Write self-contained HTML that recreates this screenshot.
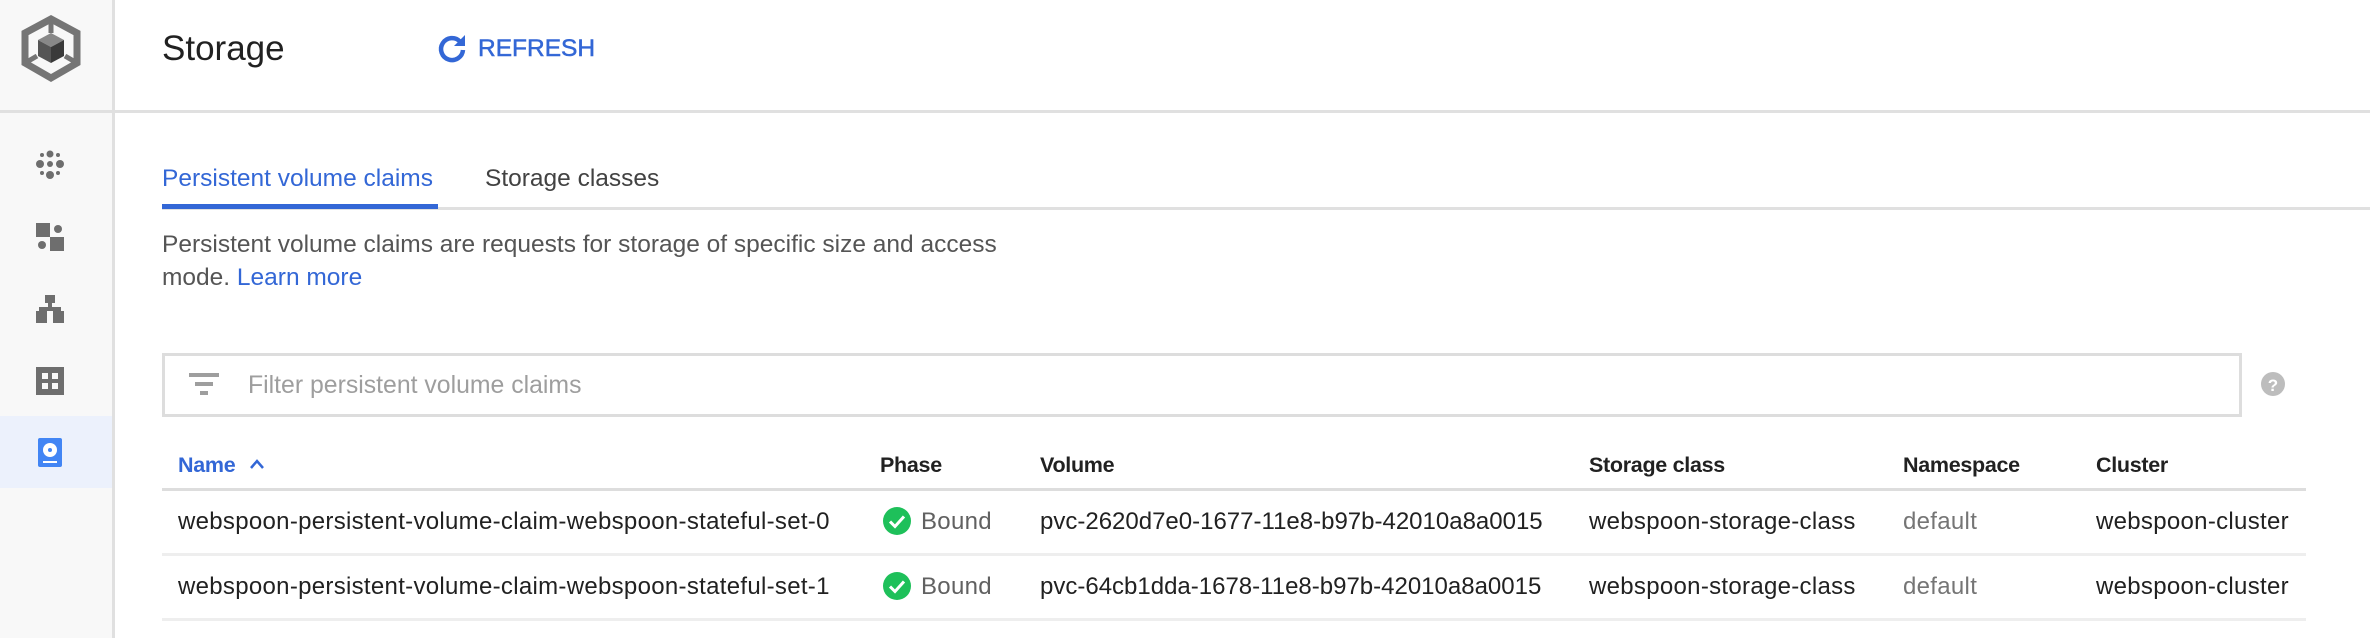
<!DOCTYPE html>
<html><head><meta charset="utf-8"><style>
*{margin:0;padding:0;box-sizing:border-box}
body{width:2370px;height:638px;overflow:hidden;background:#fff;font-family:"Liberation Sans",sans-serif;position:relative;color:#212121}
.a{position:absolute;white-space:nowrap}
.side{left:0;top:0;width:115px;height:638px;background:#f8f8f8;border-right:3px solid #e0e0e0}
.h{font-size:21.5px;font-weight:bold;color:#212121;letter-spacing:-0.3px}
.row{font-size:24px;letter-spacing:0.3px}
.vol{letter-spacing:0}
</style></head><body>
<div class="a side"></div>
<div class="a" style="left:0;top:110px;width:2370px;height:3px;background:#e0e0e0"></div>
<svg class="a" style="left:0;top:0" width="115" height="100" viewBox="0 0 115 100">
<polygon points="51,19 77,33 77,63 51,78 25,63 25,33" fill="none" stroke="#757575" stroke-width="7"/>
<line x1="51" y1="19" x2="51" y2="33" stroke="#757575" stroke-width="5"/>
<line x1="25" y1="63" x2="37" y2="56" stroke="#757575" stroke-width="5"/>
<line x1="77" y1="63" x2="65" y2="56" stroke="#757575" stroke-width="5"/>
<polygon points="51,33 64,40 51,47 38,40" fill="#888"/>
<polygon points="38,40 51,47 51,63 38,56" fill="#555"/>
<polygon points="64,40 51,47 51,63 64,56" fill="#3a3a3a"/>
</svg>
<svg class="a" style="left:36px;top:150px" width="28" height="30" viewBox="0 0 28 30">
<g fill="#6e6e6e"><circle cx="14" cy="4" r="3.5"/><circle cx="6" cy="5" r="2"/><circle cx="22" cy="5" r="2"/>
<circle cx="4" cy="14" r="4"/><circle cx="14" cy="14" r="3"/><circle cx="24" cy="14" r="4"/>
<circle cx="6" cy="23" r="2"/><circle cx="22" cy="23" r="2"/><circle cx="14" cy="25" r="4"/></g></svg>
<svg class="a" style="left:36px;top:223px" width="28" height="28" viewBox="0 0 28 28">
<g fill="#6e6e6e"><rect x="0" y="0" width="14" height="14"/><circle cx="22" cy="6" r="4"/><circle cx="6" cy="22" r="4"/><rect x="14" y="14" width="14" height="14"/></g></svg>
<svg class="a" style="left:36px;top:295px" width="28" height="28" viewBox="0 0 28 28">
<g fill="#6e6e6e"><rect x="9" y="0" width="10" height="8"/><rect x="12" y="8" width="4" height="6"/><rect x="3" y="12" width="22" height="4"/><rect x="0" y="16" width="11" height="12"/><rect x="17" y="16" width="11" height="12"/></g></svg>
<svg class="a" style="left:36px;top:367px" width="28" height="28" viewBox="0 0 28 28">
<rect width="28" height="28" fill="#6e6e6e"/><g fill="#f8f8f8"><rect x="6" y="6" width="6" height="6"/><rect x="16" y="6" width="6" height="6"/><rect x="6" y="16" width="6" height="6"/><rect x="16" y="16" width="6" height="6"/></g></svg>
<div class="a" style="left:0;top:416px;width:112px;height:72px;background:#ecf1fc"></div>
<svg class="a" style="left:38px;top:438px" width="24" height="29" viewBox="0 0 24 29">
<rect width="24" height="29" rx="2" fill="#4285f4"/><circle cx="12" cy="12" r="7" fill="#fff"/><circle cx="12" cy="12" r="2" fill="#4285f4"/><rect x="5" y="23" width="14" height="2" fill="#fff"/></svg>
<div class="a" style="left:162px;top:29px;font-size:35px;color:#212121">Storage</div>
<svg class="a" style="left:436px;top:32px" width="32" height="32" viewBox="0 0 32 32">
<path d="M24 9.5 A11 11 0 1 0 27 18" fill="none" stroke="#3367d6" stroke-width="4.5"/>
<polygon points="29,3 29,14 18,14" fill="#3367d6"/></svg>
<div class="a" style="left:478px;top:35px;font-size:24.5px;color:#3367d6;-webkit-text-stroke:0.5px #3367d6">REFRESH</div>
<div class="a" style="left:162px;top:165px;font-size:24.5px;color:#3367d6">Persistent volume claims</div>
<div class="a" style="left:485px;top:165px;font-size:24.5px;color:#424242">Storage classes</div>
<div class="a" style="left:162px;top:207px;width:2208px;height:3px;background:#e0e0e0"></div>
<div class="a" style="left:162px;top:204px;width:276px;height:5px;background:#3367d6"></div>
<div class="a" style="left:162px;top:228px;font-size:24.5px;color:#555;line-height:33px">Persistent volume claims are requests for storage of specific size and access<br>mode. <span style="color:#3367d6">Learn more</span></div>
<div class="a" style="left:162px;top:353px;width:2080px;height:64px;border:3px solid #ddd"></div>
<svg class="a" style="left:189px;top:373px" width="30" height="24" viewBox="0 0 30 24"><g fill="#9e9e9e"><rect x="0" y="0" width="30" height="4"/><rect x="6" y="9" width="18" height="4"/><rect x="11" y="18" width="8" height="4"/></g></svg>
<div class="a" style="left:248px;top:372px;font-size:24.8px;color:#9e9e9e">Filter persistent volume claims</div>
<svg class="a" style="left:2261px;top:372px" width="24" height="24" viewBox="0 0 24 24"><circle cx="12" cy="12" r="12" fill="#bdbdbd"/><text x="12" y="19" text-anchor="middle" font-family="Liberation Sans" font-weight="bold" font-size="17" fill="#fff">?</text></svg>
<div class="a h" style="left:178px;top:453px;color:#3367d6">Name</div>
<svg class="a" style="left:248px;top:457px" width="18" height="14" viewBox="0 0 18 14"><path d="M3 11 L9 4 L15 11" fill="none" stroke="#3367d6" stroke-width="2.5"/></svg>
<div class="a h" style="left:880px;top:453px">Phase</div>
<div class="a h" style="left:1040px;top:453px">Volume</div>
<div class="a h" style="left:1589px;top:453px">Storage class</div>
<div class="a h" style="left:1903px;top:453px">Namespace</div>
<div class="a h" style="left:2096px;top:453px">Cluster</div>
<div class="a" style="left:162px;top:488px;width:2144px;height:3px;background:#ddd"></div>
<div class="a" style="left:162px;top:553px;width:2144px;height:3px;background:#eee"></div>
<div class="a" style="left:162px;top:618px;width:2144px;height:3px;background:#eee"></div>

<div class="a row" style="left:178px;top:508px">webspoon-persistent-volume-claim-webspoon-stateful-set-0</div>
<svg class="a" style="left:883px;top:507px" width="28" height="28" viewBox="0 0 28 28"><circle cx="14" cy="14" r="14" fill="#1ec05a"/><path d="M7 14.5 L12 19.5 L21 9.5" fill="none" stroke="#fff" stroke-width="3"/></svg>
<div class="a row" style="left:921px;top:508px;color:#616161">Bound</div>
<div class="a row vol" style="left:1040px;top:508px">pvc-2620d7e0-1677-11e8-b97b-42010a8a0015</div>
<div class="a row" style="left:1589px;top:508px">webspoon-storage-class</div>
<div class="a row" style="left:1903px;top:508px;color:#757575">default</div>
<div class="a row" style="left:2096px;top:508px">webspoon-cluster</div>

<div class="a row" style="left:178px;top:573px">webspoon-persistent-volume-claim-webspoon-stateful-set-1</div>
<svg class="a" style="left:883px;top:572px" width="28" height="28" viewBox="0 0 28 28"><circle cx="14" cy="14" r="14" fill="#1ec05a"/><path d="M7 14.5 L12 19.5 L21 9.5" fill="none" stroke="#fff" stroke-width="3"/></svg>
<div class="a row" style="left:921px;top:573px;color:#616161">Bound</div>
<div class="a row vol" style="left:1040px;top:573px">pvc-64cb1dda-1678-11e8-b97b-42010a8a0015</div>
<div class="a row" style="left:1589px;top:573px">webspoon-storage-class</div>
<div class="a row" style="left:1903px;top:573px;color:#757575">default</div>
<div class="a row" style="left:2096px;top:573px">webspoon-cluster</div>
</body></html>
